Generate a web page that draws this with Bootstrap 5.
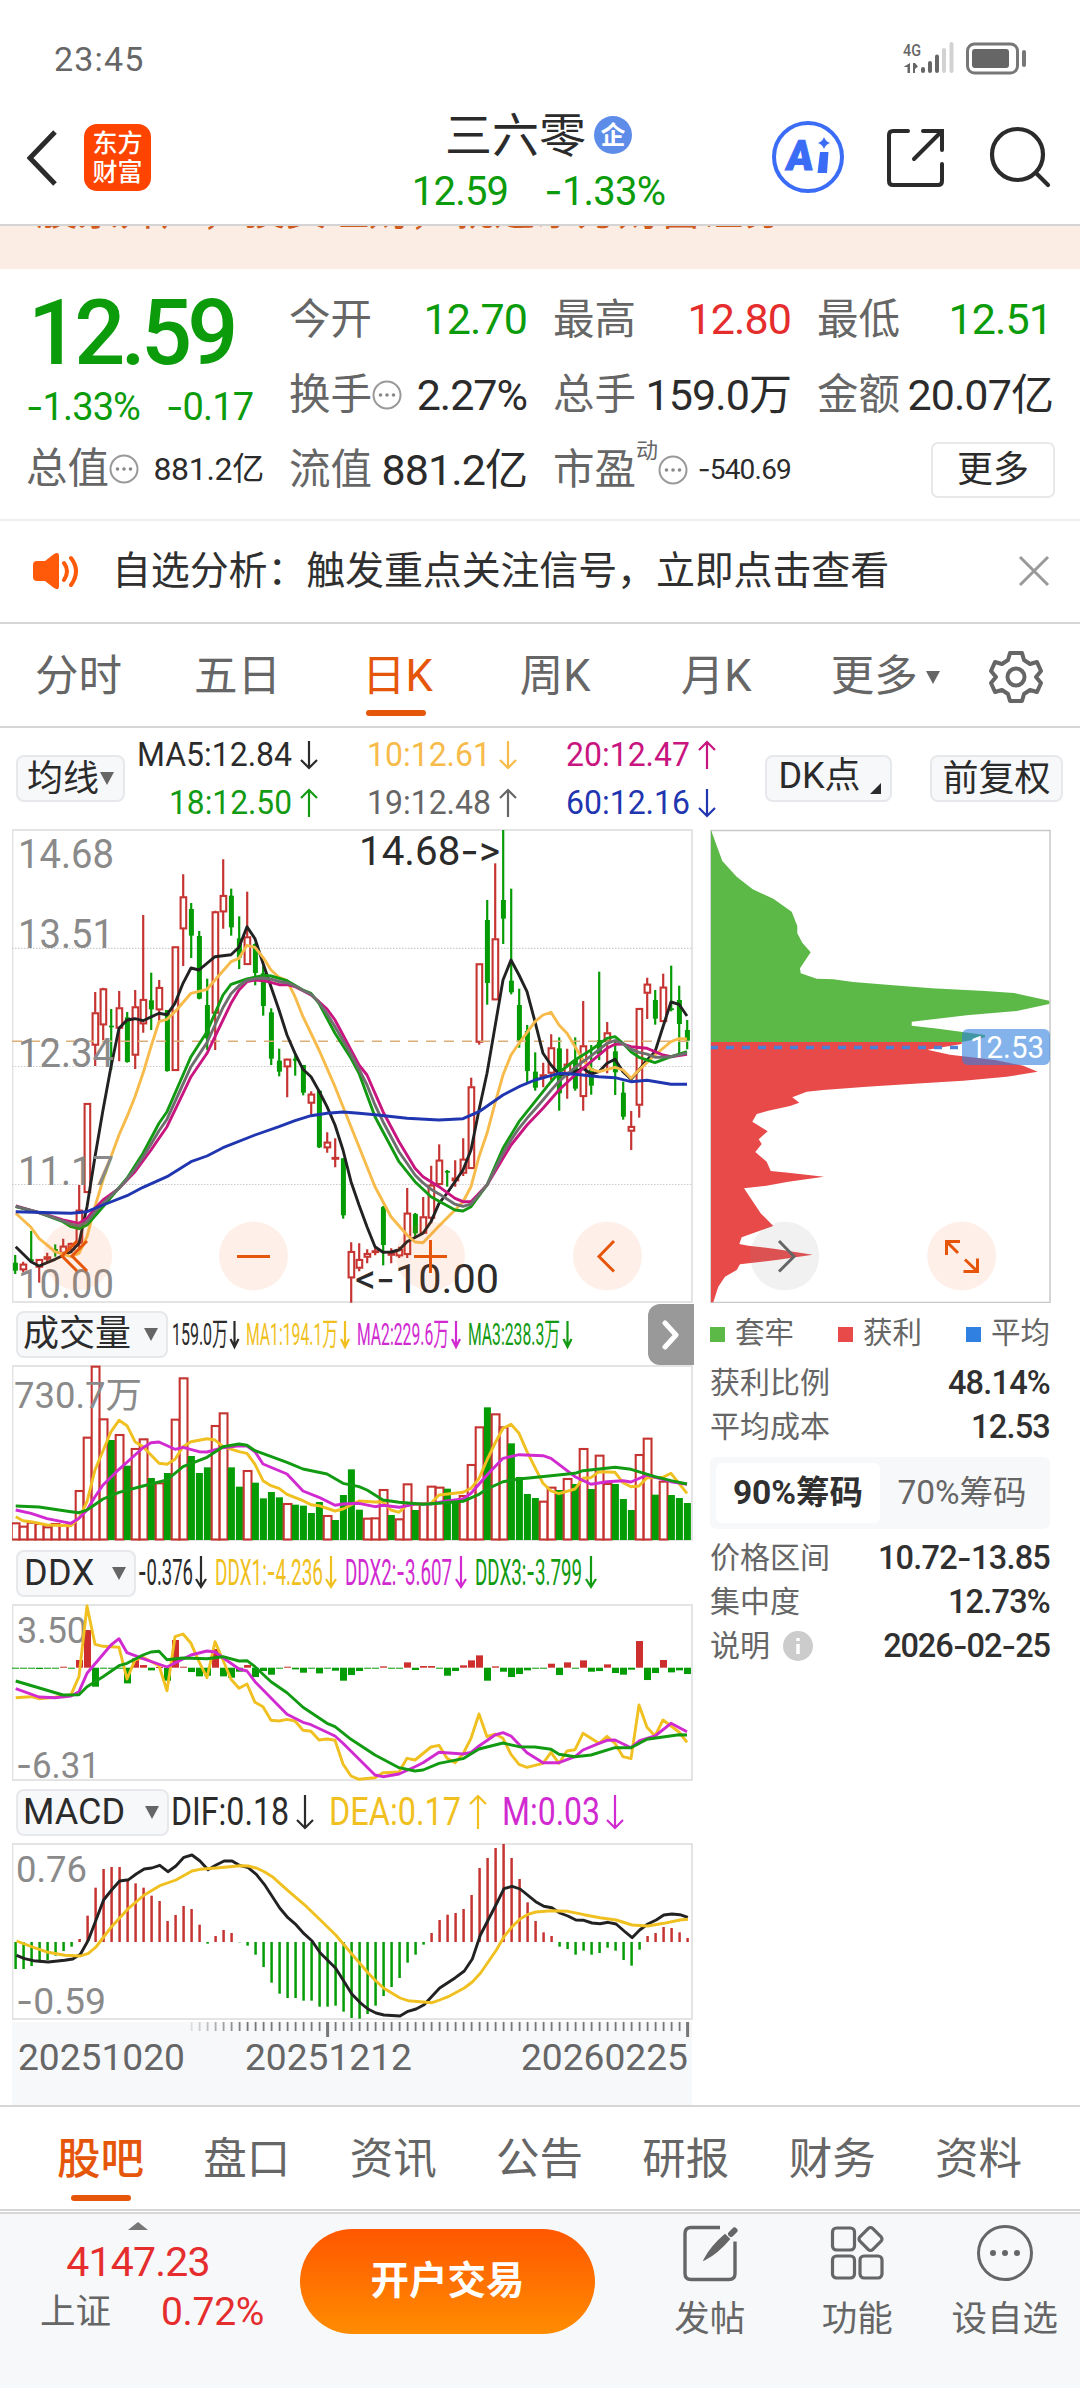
<!DOCTYPE html>
<html lang="zh-CN">
<head>
<meta charset="utf-8">
<meta name="viewport" content="width=device-width, initial-scale=1">
<title>三六零 12.59</title>
<link rel="stylesheet" href="https://cdn.jsdelivr.net/npm/bootstrap@5.3.0/dist/css/bootstrap.min.css">
<style>
  :root { --up:#e52d2d; --down:#0b9b0b; --ink:#2b2b2b; --soft:#666; --brand:#e5560b; --line:#d6d6d6; --pale:#f7f8fa; }
  body { width:1080px; height:2388px; overflow:hidden; background:#fff; color:var(--ink); line-height:1;
    font-family:Roboto,"Noto Sans CJK SC",sans-serif; }
  svg { display:block; flex:none; }
  svg text { font-family:Roboto,"Noto Sans CJK SC",sans-serif; }
  span, div { white-space:nowrap; }
  .hy { font-family:Inter,sans-serif; font-style:normal; line-height:0; }
  .c-up { color:var(--up); } .c-down { color:var(--down); } .c-soft { color:var(--soft); } .c-brand { color:var(--brand); }
  .status { height:118px; padding:0 52px 0 54px; color:#666; }
  .status .clock { font-size:34px; letter-spacing:1.2px; }
  .topbar { height:106px; border-bottom:2px solid #d4d4d4; box-sizing:content-box; }
  .logo { width:67px; height:67px; border-radius:13px; background:#ff4400; color:#fff; font-size:25px; font-weight:500; line-height:29px; margin-top:6px; }
  .title-name { font-size:47px; }
  .qi { width:38px; height:38px; border-radius:50%; background:#5d8ce9; color:#fff; font-size:25px; font-weight:700; }
  .title-quote { font-size:40px; letter-spacing:-.8px; }
  .ai { width:72px; height:72px; border:4px solid #3a6cf6; border-radius:50%; color:#3a6cf6; }
  .promo { height:43px; background:#fcede4; color:#cf5a1c; overflow:hidden; font-size:41.6px; padding-left:36px; }
  .promo span { display:block; margin-top:-36px; }
  .quote { height:250px; padding:22px 27px 0 26px; }
  .q-main { width:263px; flex:none; } .q-cell { width:238px; height:76px; }
  .q-main .big { font-size:90px; font-weight:500; letter-spacing:-4.8px; height:94px; line-height:85px; padding-left:2px; }
  .q-grid { gap:26px; }
  .lbl { font-size:41.5px; color:var(--soft); }
  .val { font-size:43px; letter-spacing:-.9px; }
  .v-sm { font-size:32px; letter-spacing:-.3px; } .v-xs { font-size:28px; letter-spacing:-.8px; }
  .more-btn { width:124px; height:56px; border:2px solid #e8e8e8; border-radius:7px; font-size:36px; color:var(--ink); padding:0; line-height:1; }
  .notice { height:105px; border-top:2px solid #eee; border-bottom:2px solid var(--line); padding:0 30px 1px 33px; font-size:39px; }
  .ktabs { height:104px; border-bottom:2px solid var(--line); font-size:43.5px; color:var(--soft); padding-top:4px; }
  .ktabs > div, .btabs > div { position:relative; }
  .tabline::after { content:""; position:absolute; left:50%; width:60px; height:6px; margin-left:-30px; border-radius:3px; background:var(--brand); }
  .ktabs .tabline::after { bottom:-17px; margin-left:-31px; } .btabs .tabline::after { bottom:-20px; }
  .chip { background:var(--pale); border:2px solid #e6e8eb; border-radius:8px; height:47px; font-size:36px; color:var(--ink); padding:0; line-height:1; }
  .tri { width:0; height:0; border:7px solid transparent; border-top:13px solid #666; border-bottom:0; }
  .ma-row { height:101px; padding-left:16px; }
  .kcol { width:694px; padding-left:12px; } .hd { height:62px; padding-left:4px; position:relative; }
  .side-btn { position:absolute; right:0; top:1px; width:46px; height:61px; background:#999; border-radius:12px 0 0 12px; }
  .dist { width:340px; margin-left:16px; }
  .legend { font-size:29.5px; color:var(--soft); height:62px; } .sq { width:15px; height:15px; margin-right:10px; }
  .drow { height:44px; font-size:30px; color:var(--soft); }
  .drow b { font-size:32.5px; font-weight:500; color:#303030; letter-spacing:-.8px; }
  .seg { height:72px; background:var(--pale); border-radius:6px; padding:6px; font-size:33.5px; color:var(--soft); margin:8px 0 7px; }
  .seg div { flex:1; height:60px; } .seg .on { background:#fff; border-radius:6px; color:#303030; font-weight:700; }
  .info-dot { width:30px; height:30px; border-radius:50%; background:#ccc; margin-left:13px; }
  .btabs { height:106px; border-top:2px solid var(--line); border-bottom:2px solid var(--line); font-size:43.5px; color:var(--soft); padding:3px 58px 0 57px; }
  .dock { height:178px; margin-top:1px; border-top:2px solid var(--line); background:var(--pale); }
  .dock-idx { width:300px; } .open-btn { width:295px; height:105px; margin-top:15px; border-radius:53px; border:0; color:#fff; font-size:38.5px; font-weight:700;
    background:linear-gradient(#ff5700,#ff8c00); }
  .dock-item { width:147.500px; font-size:35.5px; color:var(--soft); padding-top:10px; }
</style>
<script src="https://cdn.jsdelivr.net/npm/bootstrap@5.3.0/dist/js/bootstrap.bundle.min.js"></script>
</head>
<body>
<div class="status d-flex align-items-center justify-content-between">
  <span class="clock">23:45</span>
  <svg width="126" height="36" viewBox="904 42 126 36">
    <text x="905" y="57" font-size="17" font-weight="500" fill="#666" textLength="18" lengthAdjust="spacingAndGlyphs">4G</text>
    <path d="M912 64v10h-2.500v-6h-4zM915 64v10h2v-4l3-2.500-3-3.500z" fill="#666"/>
    <g stroke-width="4" stroke-linecap="round"><path d="M925 70v2M932 64v8M939 57.500v14.500" stroke="#666"/><path d="M946 51v21M953.500 45v27" stroke="#d2d2d2"/></g>
    <rect x="969.500" y="45" width="50" height="29" rx="7" fill="none" stroke="#777" stroke-width="3"/>
    <rect x="974" y="50" width="37" height="19" rx="3" fill="#666"/>
    <rect x="1024" y="51" width="4" height="17" rx="2" fill="#777"/>
  </svg>
</div>

<header class="topbar d-flex align-items-start">
  <svg width="31" height="56" viewBox="0 0 31 56" style="margin:12px 26px 0 27px"><path d="M28 2 3 28l25 26" fill="none" stroke="#2b2b2b" stroke-width="5"/></svg>
  <div class="logo d-flex flex-column align-items-center justify-content-center"><span>东方</span><span>财富</span></div>
  <div class="d-flex flex-column align-items-center" style="width:385px;margin-left:195px;margin-right:41px">
    <div class="d-flex align-items-center" style="height:34px"><span class="title-name me-2">三六零</span><span class="qi d-flex align-items-center justify-content-center">企</span></div>
    <div class="title-quote c-down d-flex" style="margin-top:20px;gap:36px"><span>12.59</span><span><i class="hy">-</i>1.33%</span></div>
  </div>
  <div class="ai d-flex align-items-center justify-content-center" style="margin-top:3px">
    <svg width="64" height="64" viewBox="776 125 64 64"><text x="0" y="0" transform="translate(785 170) skewX(-6)" font-size="42" font-weight="900" fill="#3a6cf6" stroke="#3a6cf6" textLength="27" lengthAdjust="spacingAndGlyphs">A</text>
    <path d="M820 152h8.500l-1.500 21h-9.500zM824 137q1.500 4.500 6 6-4.500 1.500-6 6-1.500-4.500-6-6 4.500-1.500 6-6z" fill="#3a6cf6"/></svg>
  </div>
  <svg width="60" height="60" viewBox="887 128 60 60" style="margin:10px 0 0 42px" fill="none" stroke="#2b2b2b" stroke-width="4" stroke-linecap="round"><path d="M909 131h-15q-4 0-4 4v46q0 4 4 4h45q4 0 4-4v-17M924 131h19v19M942 132l-27 27"/></svg>
  <svg width="64" height="64" viewBox="989 126 64 64" style="margin:8px 0 0 42px" fill="none" stroke="#2b2b2b" stroke-width="4.200" stroke-linecap="round"><circle cx="1018.500" cy="154.500" r="25.500"/><path d="m1037 173 12 12"/></svg>
</header>

<div class="promo"><span>股票开户，投资理财，就选东方财富证券</span></div>

<section class="quote d-flex">
  <div class="q-main">
    <div class="big c-down">12.59</div>
    <div class="c-down d-flex" style="font-size:38px;height:57px;padding-top:3px;gap:26px;letter-spacing:-.9px"><span><i class="hy">-</i>1.33%</span><span><i class="hy">-</i>0.17</span></div>
    <div class="q-cell d-flex align-items-center justify-content-between" style="height:53px"><span class="d-flex align-items-center lbl">总值<svg width="30" height="30"><use href="#dots"/></svg></span><span class="v-sm">881.2亿</span></div>
  </div>
  <div class="flex-fill">
    <div class="q-grid d-flex align-items-center" style="height:57px">
      <div class="q-cell d-flex align-items-center justify-content-between"><span class="lbl">今开</span><span class="val c-down">12.70</span></div>
      <div class="q-cell d-flex align-items-center justify-content-between"><span class="lbl">最高</span><span class="val c-up">12.80</span></div>
      <div class="q-cell d-flex align-items-center justify-content-between" style="width:235px"><span class="lbl">最低</span><span class="val c-down">12.51</span></div>
    </div>
    <div class="q-grid d-flex align-items-center" style="height:94px">
      <div class="q-cell d-flex align-items-center justify-content-between"><span class="d-flex align-items-center lbl">换手<svg width="30" height="30"><use href="#dots"/></svg></span><span class="val" style="letter-spacing:-1px">2.27%</span></div>
      <div class="q-cell d-flex align-items-center justify-content-between"><span class="lbl">总手</span><span class="val">159.0万</span></div>
      <div class="q-cell d-flex align-items-center justify-content-between" style="width:236px"><span class="lbl">金额</span><span class="val">20.07亿</span></div>
    </div>
    <div class="q-grid d-flex align-items-center" style="height:56px">
      <div class="q-cell d-flex align-items-center justify-content-between"><span class="lbl">流值</span><span class="val">881.2亿</span></div>
      <div class="q-cell d-flex align-items-center justify-content-between"><span class="d-flex align-items-center lbl">市盈<span style="font-size:22px;margin-top:-38px">动</span><svg width="30" height="30"><use href="#dots"/></svg></span><span class="v-xs"><i class="hy">-</i>540.69</span></div>
      <div class="q-cell d-flex align-items-center justify-content-end"><button class="btn more-btn">更多</button></div>
    </div>
  </div>
</section>

<div class="notice d-flex align-items-center">
  <svg width="46" height="38" viewBox="0 0 46 38"><path d="M0 13q0-4 4-4h8L21 2q5-3 5 2v30q0 5-5 2l-9-7H4q-4 0-4-4z" fill="#ff5a0a"/><path d="M31 11q6 8 0 17M38 6q10 13 0 27" fill="none" stroke="#ff5a0a" stroke-width="4" stroke-linecap="round"/></svg>
  <span class="flex-fill" style="margin-left:33px;color:#303030;letter-spacing:-.15px">自选分析：触发重点关注信号，立即点击查看</span>
  <svg width="32" height="32"><path d="m2 2 28 28M30 2 2 30" stroke="#999" stroke-width="3"/></svg>
</div>

<nav class="ktabs d-flex align-items-center">
  <div style="margin-left:35px;width:159px">分时</div><div style="width:168px">五日</div>
  <div class="c-brand tabline">日K</div>
  <div style="margin-left:87px;width:161px">周K</div><div style="width:150px">月K</div>
  <div class="d-flex align-items-center" style="width:158px">更多<i class="tri ms-2"></i></div>
  <svg width="54" height="54" viewBox="-27 -27 54 54" fill="none" stroke="#666" stroke-width="4" stroke-linejoin="round"><path d="M-6-24H6L8-17 14-13 21-15 25-6 20 0 25 6 21 15 14 13 8 17 6 24H-6L-8 17-14 13-21 15-25 6-20 0-25-6-21-15-14-13-8-17z"/><circle r="8.500"/></svg>
</nav>

<div class="ma-row d-flex align-items-center">
  <button class="btn chip d-flex align-items-center justify-content-center" style="width:109px">均线<i class="tri" style="margin-left:1px"></i></button>
  <svg width="600" height="100" viewBox="130 729 600 100" font-size="33" style="margin-left:5px">
    <g id="maHead"></g>
  </svg>
  <button class="btn chip d-flex align-items-end justify-content-center" style="width:127px;margin-left:35px;padding:0 0 6px 2px"><span>DK点</span><svg width="11" height="11" style="margin-left:9px"><path d="M11 0v11H0z" fill="#2b2b2b"/></svg></button>
  <button class="btn chip" style="width:133px;margin-left:38px">前复权</button>
</div>

<main class="d-flex" style="height:1276px">
  <div class="kcol">
    <svg id="kline" width="682" height="474" viewBox="12 829 682 474"></svg>
    <div class="hd d-flex align-items-center">
      <button class="btn chip d-flex align-items-center" style="width:152px;padding-left:5px">成交量<i class="tri ms-auto" style="margin-right:8px"></i></button>
      <svg width="420" height="60" viewBox="170 1304 420 60" style="margin-left:2px" font-size="32"><g id="volHead"></g></svg>
      <div class="side-btn d-flex align-items-center justify-content-center"><svg width="20" height="30"><path d="m4 3 11 12L4 27" fill="none" stroke="#fff" stroke-width="5" stroke-linecap="round" stroke-linejoin="round"/></svg></div>
    </div>
    <svg id="vol" width="682" height="177" viewBox="12 1365 682 177"></svg>
    <div class="hd d-flex align-items-center">
      <button class="btn chip d-flex align-items-center" style="width:120px;padding-left:6px;letter-spacing:.4px">DDX<i class="tri ms-auto" style="margin-right:8px"></i></button>
      <svg width="470" height="60" viewBox="138 1543 470 60" style="margin-left:2px" font-size="37"><g id="ddxHead"></g></svg>
    </div>
    <svg id="ddx" width="682" height="177" viewBox="12 1604 682 177"></svg>
    <div class="hd d-flex align-items-center">
      <button class="btn chip d-flex align-items-center" style="width:153px;padding-left:5px">MACD<i class="tri ms-auto" style="margin-right:8px"></i></button>
      <svg width="470" height="60" viewBox="170 1782 470 60" style="margin-left:1px" font-size="38"><g id="macdHead"></g></svg>
    </div>
    <svg id="macd" width="682" height="177" viewBox="12 1843 682 177"></svg>
    <svg id="axis" width="682" height="85" viewBox="12 2020 682 85"></svg>
  </div>
  <div class="dist">
    <svg id="chips" width="341" height="474" viewBox="710 829 341 474"></svg>
    <div class="legend d-flex align-items-center justify-content-between">
      <span class="d-flex align-items-center"><i class="sq" style="background:#5cb947"></i>套牢</span>
      <span class="d-flex align-items-center"><i class="sq" style="background:#e84a4a"></i>获利</span>
      <span class="d-flex align-items-center"><i class="sq" style="background:#3080e2"></i>平均</span>
    </div>
    <div style="margin-top:-4px">
      <div class="drow d-flex align-items-center justify-content-between"><span>获利比例</span><b>48.14%</b></div>
      <div class="drow d-flex align-items-center justify-content-between"><span>平均成本</span><b>12.53</b></div>
      <div class="seg d-flex text-center"><div class="on d-flex align-items-center justify-content-center">90%筹码</div><div class="d-flex align-items-center justify-content-center">70%筹码</div></div>
      <div class="drow d-flex align-items-center justify-content-between"><span>价格区间</span><b>10.72<i class="hy">-</i>13.85</b></div>
      <div class="drow d-flex align-items-center justify-content-between"><span>集中度</span><b>12.73%</b></div>
      <div class="drow d-flex align-items-center justify-content-between"><span class="d-flex align-items-center">说明<svg class="info-dot" viewBox="0 0 30 30"><path d="M15 7v3M15 13v10" stroke="#fff" stroke-width="3.500"/></svg></span><b style="letter-spacing:-1.100px">2026<i class="hy">-</i>02<i class="hy">-</i>25</b></div>
    </div>
  </div>
</main>

<nav class="btabs d-flex align-items-center justify-content-between">
  <div class="c-brand tabline" style="font-weight:500">股吧</div><div>盘口</div><div>资讯</div><div>公告</div><div>研报</div><div>财务</div><div>资料</div>
</nav>

<footer class="dock d-flex align-items-start">
  <div class="dock-idx d-flex flex-column align-items-center" style="padding-right:24px">
    <svg width="20" height="8" style="margin-top:8px"><path d="M10 0 20 8H0z" fill="#777"/></svg>
    <span class="c-up" style="font-size:41px;margin-top:12px;letter-spacing:-.8px">4147.23</span>
    <div class="d-flex align-items-center" style="gap:50px;margin-top:10px;padding-left:28px"><span class="c-soft" style="font-size:35.500px">上证</span><span class="c-up" style="font-size:39px;letter-spacing:-.3px">0.72%</span></div>
  </div>
  <button class="open-btn">开户交易</button>
  <div class="dock-item d-flex flex-column align-items-center" style="margin-left:41px">
    <svg width="56" height="58" viewBox="682 2223 56 58" fill="none" stroke="#666" stroke-width="3.400"><path d="M720 2226.500h-29q-6 0-6 6v40q0 6 6 6h38q6 0 6-6v-32"/><path d="M729 2238q-12 14-24 20 6-12 20-24z" fill="#666" stroke-width="2"/><path d="m731 2233 3.500-3.500" stroke-width="6" stroke-linecap="round"/></svg><span style="margin-top:20px">发帖</span></div>
  <div class="dock-item d-flex flex-column align-items-center">
    <svg width="56" height="58" viewBox="830 2223 56 58" fill="none" stroke="#666" stroke-width="3.200"><rect x="833.500" y="2227" width="22" height="22" rx="4"/><rect x="833.500" y="2255" width="22" height="22" rx="4"/><rect x="861" y="2255" width="22" height="22" rx="4"/><rect x="862.500" y="2229" width="18" height="18" rx="3" transform="rotate(45 871.500 2238)"/></svg><span style="margin-top:20px">功能</span></div>
  <div class="dock-item d-flex flex-column align-items-center">
    <svg width="58" height="58" viewBox="-29 -29 58 58"><circle r="26.500" fill="none" stroke="#666" stroke-width="3"/><g fill="#666"><circle cx="-12" r="3"/><circle r="3"/><circle cx="12" r="3"/></g></svg><span style="margin-top:20px">设自选</span></div>
</footer>

<svg width="0" height="0" class="position-absolute"><defs><symbol id="dots" viewBox="0 0 30 30"><circle cx="15" cy="15" r="13.500" fill="none" stroke="#999" stroke-width="2"/><g fill="#888"><circle cx="8.500" cy="15" r="1.800"/><circle cx="15" cy="15" r="1.800"/><circle cx="21.500" cy="15" r="1.800"/></g></symbol></defs></svg>

<script>
const RED='#c63432', GREEN='#049c04', BLACK='#2b2b2b', GOLD='#f0c020', PINK='#d02ad0', LEAF='#129a12';
const put=(id,s)=>document.getElementById(id).innerHTML=s;
const X=i=>15+8*i;
const txt=(s,x,y,w,size,fill)=>`<text x="${x}" y="${y}" font-size="${size}" fill="${fill}" textLength="${w}" lengthAdjust="spacingAndGlyphs">${s.replace('-','<tspan class="hy">-</tspan>')}</text>`;
const arrow=(x,y0,y1,up,c,h=6)=>up?`<path d="M${x} ${y1}V${y0+1}M${x-h} ${y0+9}L${x} ${y0+1}L${x+h} ${y0+9}" fill="none" stroke="${c}" stroke-width="2.2"/>`
  :`<path d="M${x} ${y0}V${y1-1}M${x-h} ${y1-9}L${x} ${y1-1}L${x+h} ${y1-9}" fill="none" stroke="${c}" stroke-width="2.2"/>`;
/* points are stored at three times the drawn scale */
const line=(s,oy,c,sx=3,w=2.9)=>`<polyline fill="none" stroke="${c}" stroke-width="${w}" stroke-linejoin="round" points="${s.trim().split(/\s+/).map(p=>{const[a,b]=p.split(',');return (a/sx).toFixed(1)+','+(oy+b/3).toFixed(1)}).join(' ')}"/>`;
const box=(y0,y1)=>`<rect x="12.5" y="${y0}" width="679.5" height="${y1-y0}" fill="none" stroke="#e2e2e2" stroke-width="1.8"/>`;

/* header rows */
put('maHead',[['MA5:12.84',137,155,766,0,BLACK,309],['10:12.61',367,124,766,0,'#f7bb4b',508],['20:12.47',566,124,766,1,'#c91580',707],
 ['18:12.50',169,123,814,1,LEAF,309],['19:12.48',367,124,814,1,'#666',508],['60:12.16',566,124,814,0,'#1f36b0',707]]
 .map(([s,x,w,y,u,c,a])=>txt(s,x,y,w,33,c)+arrow(a,y-25,y+3,u,c,8)).join(''));
put('volHead',[['159.0万',172,56,BLACK,234.5],['MA1:194.1万',246,92,GOLD,345],['MA2:229.6万',357,92,PINK,456],['MA3:238.3万',468,92,LEAF,567.5]]
 .map(([s,x,w,c,a])=>txt(s,x,1345,w,32,c)+arrow(a,1321,1348,0,c,4)).join(''));
put('ddxHead',[['-0.376',138,55,BLACK,201],['DDX1:-4.236',215,108,GOLD,331],['DDX2:-3.607',345,107,PINK,461],['DDX3:-3.799',475,107,LEAF,591]]
 .map(([s,x,w,c,a])=>txt(s,x,1585,w,37,c)+arrow(a,1556,1588,0,c,5)).join(''));
put('macdHead',[['DIF:0.18',171,118,BLACK,305,0],['DEA:0.17',329,132,GOLD,478,1],['M:0.03',502,98,PINK,615,0]]
 .map(([s,x,w,c,a,u])=>txt(s,x,1825,w,38,c)+arrow(a,1795,1829,u,c,8)).join(''));

/* candles: colour, high, body top, body bottom, low */
const K=`g1305,1328,1352,1362 r1325,1332,1350,1357 g1233,1318,1322,1322 r1318,1318,1342,1388 r1298,1310,1318,1328 g1273,1287,1297,1310 r1256,1278,1300,1305 r1268,1270,1290,1300 r1095,1170,1270,1290 r850,850,1118,1118
r516,578,676,738 r503,506,615,660 g567,617,622,750 r513,563,625,724 g576,592,726,728 r510,560,706,747 r285,538,612,638 g458,541,568,630 r480,502,570,605 g570,570,753,755
r380,380,752,752 r163,230,327,438 g249,267,347,414 g333,348,536,538 g476,555,655,690 r272,275,580,690 r118,226,276,326 g206,227,322,347 g289,355,413,447 r215,350,434,434
g370,372,459,496 g437,460,558,587 g565,577,716,735 g686,722,755,769 r716,717,741,832 g700,716,722,767 g735,735,818,826 r814,822,850,884 g812,812,982,984 r937,966,984,998
r955,1012,1017,1042 g1015,1015,1186,1196 r1267,1294,1374,1448 r1270,1318,1345,1354 r1288,1300,1312,1330 r1278,1292,1298,1306 g1158,1161,1275,1336 r1285,1298,1306,1330 r1280,1288,1308,1314 r1104,1179,1304,1314
g1179,1182,1240,1250 r1131,1190,1240,1242 r1037,1095,1195,1210 r973,1020,1094,1094 g1050,1053,1058,1100 r1021,1074,1083,1100 r955,1017,1060,1068 r773,800,1046,1046 r431,431,667,674 g240,300,489,554
r130,356,540,540 g30,240,296,372 g206,482,517,523 g506,555,662,683 g615,633,753,792 g697,755,803,812 r728,764,770,802 r643,683,760,780 g652,685,820,872 r686,732,760,836
g652,720,806,812 r543,677,830,872 g675,745,797,824 g455,660,703,720 r606,638,665,760 g660,694,757,825 g785,818,890,899 r873,919,934,990 r565,565,856,893 r473,492,520,597
g510,540,596,614 r461,501,605,605 g437,565,570,574 g497,540,612,700 g600,630,662,688`.split(/\s+/);
const candles=K.map((s,i)=>{const r=s[0]=='r',[h,t,b,l]=s.slice(1).split(',').map(v=>820+v/3),x=X(i)+.2;
  return r?`<path d="M${x} ${h}V${t}M${x} ${b}V${l}" stroke="${RED}" stroke-width="2.2"/><rect x="${x-2.6}" y="${t+.6}" width="5.6" height="${Math.max(b-t-1.2,.8)}" fill="#fff" stroke="${RED}" stroke-width="2.1"/>`
  :`<path d="M${x} ${h}V${l}" stroke="${GREEN}" stroke-width="2.2"/><rect x="${x-2.3}" y="${t}" width="5" height="${Math.max(b-t,1.6)}" fill="${GREEN}"/>`}).join('');
const m18='47,1160 117,1178 189,1205 213,1220 237,1226 261,1215 309,1160 381,1075 429,1000 477,910 501,875 549,765 573,710 621,635 645,580 669,525 693,493 741,477 789,466 813,468 861,482 909,510 933,520 957,550 1005,640 1053,715 1077,760 1125,890 1197,1025 1245,1085 1293,1130 1365,1170 1389,1173 1413,1160 1461,1095 1485,1040 1509,985 1557,905 1605,845 1653,785 1677,758 1725,720 1773,690 1821,655 1845,650 1869,670 1893,695 1917,712 1965,728 2013,710 2061,695';
const m20='47,1158 141,1185 189,1200 237,1210 261,1195 285,1165 309,1140 357,1105 405,1055 453,990 477,955 501,920 549,820 573,770 621,700 645,650 693,550 717,510 741,485 765,480 789,482 813,487 837,494 861,494 885,500 909,512 933,525 957,545 981,567 1005,600 1029,645 1053,690 1077,735 1101,765 1149,875 1197,965 1245,1045 1269,1070 1317,1100 1365,1135 1389,1145 1413,1145 1461,1095 1509,1015 1533,975 1581,915 1629,865 1677,810 1725,765 1773,725 1821,685 1845,673 1869,672 1893,680 1941,685 1989,705 2013,710 2061,703';
const at=(s,x)=>{const p=s.split(' ').map(q=>q.split(',').map(Number));for(let i=1;i<p.length;i++)if(x<=p[i][0]){const[a,b]=[p[i-1],p[i]];return a[1]+(b[1]-a[1])*(x-a[0])/(b[0]-a[0])}return p[p.length-1][1]};
const m19=[...Array(85)].map((_,i)=>{const x=Math.max(47,45+24*i);return x+','+(at(m18,x)+at(m20,x))/2}).join(' ');
const pad=(x,c='#f96a28',o=.1)=>`<circle cx="${x}" cy="1256" r="34.5" fill="${c}" fill-opacity="${o}"/>`;
const ink='fill="none" stroke="#e5560b" stroke-width="3"';
put('kline',box(830,1302)+[948.3,1066.5,1184.5].map(y=>`<path d="M12 ${y}H692" stroke="#ccc" stroke-width="1.2" stroke-dasharray="1.5 1.5"/>`).join('')
 +candles+`<path d="M12 1041.3H692" stroke="#dcae78" stroke-width="1.6" stroke-dasharray="10 8"/>`
 +line('47,1280 93,1325 117,1338 165,1318 213,1295 237,1270 261,1160 285,1010 309,870 333,740 357,625 381,600 405,596 429,602 477,580 501,584 525,550 549,490 573,444 597,450 645,410 693,404 717,382 741,320 765,356 789,430 813,500 837,570 861,645 885,700 909,748 933,770 957,813 981,860 1005,915 1029,990 1053,1085 1077,1155 1101,1220 1125,1280 1149,1297 1173,1296 1197,1290 1221,1265 1269,1240 1293,1205 1317,1150 1341,1120 1389,1050 1413,990 1437,870 1461,760 1485,620 1509,480 1533,420 1557,465 1581,515 1605,605 1629,700 1653,735 1677,762 1701,765 1749,745 1773,762 1797,755 1821,730 1845,718 1869,755 1893,778 1917,750 1941,720 1965,695 1989,620 2013,546 2037,553 2061,588',820,'#222')
 +line('47,1180 93,1222 117,1255 165,1295 213,1310 237,1300 261,1250 285,1160 309,1080 333,1010 357,945 381,890 405,830 429,760 453,680 477,605 501,598 525,575 573,520 621,508 645,480 693,425 717,415 741,376 765,382 789,412 813,450 837,472 861,482 885,530 909,590 957,690 1005,800 1029,860 1077,980 1125,1100 1173,1190 1221,1245 1245,1266 1269,1268 1317,1218 1365,1170 1389,1145 1413,1100 1437,1010 1461,940 1485,850 1509,765 1533,705 1557,670 1605,605 1629,585 1653,577 1677,615 1701,640 1749,720 1773,748 1797,755 1845,742 1869,750 1893,775 1917,750 1965,705 2013,665 2037,656 2061,657',820,'#f7bb4b')
 +line(m20,820,'#c91580')+line(m18,820,LEAF)+line(m19,820,'#6e6e6e')
 +line('47,1175 213,1180 261,1175 309,1155 381,1127 429,1102 501,1070 573,1025 621,1008 669,983 765,945 837,920 885,902 933,887 981,880 1029,876 1077,880 1125,884 1221,895 1317,900 1389,896 1437,875 1509,825 1557,800 1605,780 1677,760 1725,763 1797,770 1845,773 1893,785 1941,781 2013,793 2061,793',820,'#1f36b0')
 +[['14.68',868],['13.51',947.5],['12.34',1066.5],['11.17',1184.5],['10.00',1298]].map(([s,y])=>txt(s,18,y,96,40,'#8a8a8a')).join('')
 +txt('14.68-&gt;',359,865,141,40,BLACK)+txt('&lt;-10.00',355,1293,144,40,BLACK)
 +pad(77.7)+pad(253.5)+pad(430.5)+pad(607.5)
 +`<path ${ink} d="M77 1241l-15 15 15 15M87 1241l-15 15 15 15M237 1256.500h33M414 1256.500h33M430.500 1240v33M614 1241l-15 15.500 15 15"/>`);

/* chip distribution */
const poly=(s,c)=>`<polygon fill="${c}" points="${s.split(' ').map(p=>{const[a,b]=p.split(',');return (690+a/3).toFixed(1)+','+(820+b/3).toFixed(1)}).join(' ')}"/>`;
put('chips',`<rect x="711" y="830.500" width="339" height="472" fill="none" stroke="#c8c8c8" stroke-width="1.500"/>`
 +poly('63,30 97,123 140,170 188,208 250,236 305,275 322,318 322,340 337,368 362,397 340,430 330,445 332,460 380,476 430,478 490,486 600,495 725,505 885,513 972,519 1078,542 1078,552 980,573 830,586 665,605 665,617 745,626 885,645 885,652 815,666 63,666','#5cb947')
 +poly('63,666 815,666 815,672 712,689 780,704 915,720 1000,737 1043,755 950,770 820,782 660,792 530,800 400,810 350,815 307,832 328,848 300,858 235,872 200,882 187,905 233,934 206,958 215,972 196,996 230,1025 242,1053 295,1058 402,1070 295,1085 225,1098 162,1105 212,1180 250,1218 155,1252 148,1272 175,1277 252,1286 368,1304 265,1319 150,1333 140,1350 105,1370 85,1400 70,1447 63,1447','#e84a4a')
 +`<path d="M711 1047.500H962" stroke="#4a80d8" stroke-width="3.500" stroke-dasharray="8 8" stroke-dashoffset="1"/><rect x="962" y="1029" width="88" height="36" rx="6" fill="#3280e0" fill-opacity=".6"/>`
 +txt('12.53',970,1058,74,32,'#fff')+pad(784.7,'#888',.12)+pad(961.7)
 +`<path d="M779 1241l15 15.500-15 15" fill="none" stroke="#666" stroke-width="3"/><path ${ink} d="M946.500 1255v-13.500H960M947 1242l11 11M977.500 1258.500V1271.500H963.500M977 1271l-12-11.500"/>`);

/* volume */
const V='r670 r680 r668 r672 r682 r672 r676 r670 r573 r413 r200 r358 g420 r405 g497 r447 r418 g534 r550 g519 r359 r235 g468 g519 g502 r378 r340 g502 g560 r513 g548 g595 g576 g592 r612 g614 g617 g639 g606 r648 g660 g585 g508 g629 r656 r655 r570 g645 r658 r553 g630 r612 r560 r563 g566 g606 r588 r495 r382 g322 r343 r382 g430 g531 g582 g594 r605 r563 g570 r537 g552 r447 g567 r467 r552 g552 g597 g630 r465 r416 g584 r545 g585 g594 g609'.split(' ');
put('vol',box(1366,1540)+V.map((s,i)=>{const y=1300+s.slice(1)/3,x=X(i)+.4;return s[0]=='r'?`<rect x="${x-3.7}" y="${y}" width="7.8" height="${1539.5-y}" fill="#fff" stroke="${RED}" stroke-width="2.1"/>`:`<rect x="${x-3.5}" y="${y}" width="7" height="${1540-y}" fill="${GREEN}"/>`}).join('')
 +txt('730.7万',14,1408,128,36,'#8a8a8a')
 +line('47,650 69,662 93,665 141,675 213,677 237,655 261,605 285,510 333,395 357,361 381,377 405,425 429,440 477,490 501,493 525,478 549,440 573,425 621,416 645,420 669,440 717,455 741,460 765,493 789,542 813,557 837,565 861,583 909,602 933,614 957,617 1005,633 1029,627 1077,603 1125,606 1149,605 1173,630 1197,637 1221,615 1293,610 1317,585 1389,577 1413,565 1437,535 1461,480 1485,430 1509,385 1533,373 1557,400 1581,455 1629,550 1653,573 1677,581 1725,567 1749,535 1773,533 1797,515 1845,517 1869,548 1893,560 1917,558 1941,533 1989,532 2013,520 2061,580',1300,GOLD)
 +line('47,630 93,640 141,656 213,670 237,655 261,630 285,590 309,555 357,508 405,465 429,443 453,428 477,426 525,448 549,442 597,455 621,456 669,443 717,437 741,438 765,455 789,492 861,522 909,573 957,592 1005,616 1029,612 1077,610 1125,620 1149,616 1197,622 1245,612 1293,612 1341,603 1389,597 1413,580 1461,525 1509,475 1557,464 1629,467 1653,475 1725,530 1773,553 1821,545 1869,542 1893,546 1941,525 2013,545 2061,553',1300,PINK)
 +line('47,618 117,621 213,635 237,638 261,630 309,597 357,577 429,558 501,540 549,500 621,472 669,440 717,432 741,436 765,452 861,487 909,507 981,522 1029,550 1077,560 1101,570 1149,600 1197,607 1269,613 1317,610 1389,604 1437,583 1461,567 1509,545 1557,537 1653,527 1725,520 1749,512 1797,507 1845,502 1893,508 1965,530 2013,542 2061,552',1300,LEAF));

/* DDX */
const D=[-2,-2,-2,-4,-2,-2,3,-2,23,113,-57,-2,-2,-2,-47,28,8,-8,2,-39,83,3,-13,-26,-24,56,-26,-30,-12,8,-28,-10,-21,-2,3,-5,-15,-3,-17,-3,-9,-39,-22,-10,-3,-3,4,-3,-3,16,-7,5,5,-2,-24,-10,7,22,37,-39,4,-12,-28,-19,-8,-2,-2,12,-22,16,-2,22,-12,-10,10,-16,-21,-6,80,-37,-16,23,-14,-8,-19];
put('ddx',box(1605,1780)+D.map((v,i)=>`<rect x="${X(i)-3}" y="${1667.7-(v>0?v/3:0)}" width="7" height="${Math.max(Math.abs(v)/3,1)}" fill="${v>0?'#cc2f2d':GREEN}"/>`).join('')
 +txt('3.50',17,1643,70,37,'#8a8a8a')+txt('-6.31',16,1778,84,37,'#8a8a8a')
 +line('47,1193 93,1190 117,1196 165,1192 213,1184 237,1130 261,918 285,1033 309,1039 357,1042 381,1137 405,1080 429,1072 477,1097 501,1172 525,1010 549,1002 573,1030 597,1085 621,1133 645,1025 669,1080 693,1138 717,1165 741,1152 765,1207 789,1220 813,1261 837,1263 861,1258 885,1263 909,1291 933,1294 957,1320 981,1317 1005,1321 1029,1392 1053,1428 1077,1438 1125,1433 1149,1418 1197,1416 1221,1375 1245,1380 1293,1341 1317,1336 1341,1375 1365,1388 1389,1362 1413,1315 1437,1242 1461,1310 1485,1302 1509,1315 1533,1363 1557,1393 1581,1402 1629,1390 1653,1357 1677,1390 1701,1353 1725,1349 1749,1300 1797,1330 1821,1309 1845,1330 1869,1370 1893,1376 1917,1215 1941,1282 1965,1308 1989,1260 2037,1296 2061,1327',1300,GOLD)
 +line('47,1166 117,1191 165,1193 213,1188 237,1175 261,1120 333,1035 357,1016 381,1058 429,1076 501,1101 573,1065 621,1053 645,1056 717,1107 741,1113 765,1145 861,1243 909,1267 933,1274 1005,1308 1029,1330 1125,1425 1149,1430 1197,1422 1245,1400 1269,1388 1317,1357 1389,1362 1413,1357 1437,1338 1485,1305 1509,1298 1533,1308 1581,1358 1629,1388 1677,1388 1725,1370 1749,1350 1797,1330 1821,1321 1845,1320 1893,1343 1917,1323 1965,1308 2013,1270 2061,1295',1300,PINK)
 +line('47,1143 189,1185 237,1184 261,1160 309,1130 357,1097 381,1090 429,1065 453,1056 477,1054 501,1079 549,1074 621,1076 669,1070 717,1083 741,1082 765,1100 813,1145 861,1178 909,1222 981,1270 1005,1280 1053,1318 1125,1365 1197,1403 1245,1413 1269,1410 1317,1390 1389,1376 1437,1347 1509,1329 1557,1340 1605,1341 1653,1348 1677,1363 1725,1370 1773,1365 1845,1343 1893,1343 1941,1318 2037,1304 2061,1305',1300,LEAF));

/* MACD */
const M=[597,597,588,577,570,557,543,530,507,437,353,297,291,291,330,340,353,377,393,453,435,408,417,464,521,498,480,489,517,527,554,591,638,671,684,684,692,692,710,710,707,725,744,746,732,707,678,651,624,578,554,524,489,450,434,429,417,375,294,264,234,222,264,327,397,453,487,498,530,537,554,542,554,549,533,542,570,587,539,498,489,471,474,487,504];
put('macd',box(1844,2019)+M.map((v,i)=>`<path d="M${X(i)+.6} 1942V${1770+v/3}" stroke="${v<515?RED:GREEN}" stroke-width="2.5"/>`).join('')
 +txt('0.76',16,1882,71,36,'#8a8a8a')+txt('-0.59',16,2014,90,36,'#8a8a8a')
 +line('37,556 55,566 75,572 108,576 145,571 163,567 180,553 198,510 215,450 232,390 250,360 268,333 288,329 305,312 323,297 340,294 358,286 376,305 394,288 412,262 430,255 448,273 466,299 484,285 502,273 520,273 538,287 556,293 574,313 592,343 627,415 645,443 663,464 681,491 699,513 717,548 752,595 770,633 788,672 806,697 824,717 842,729 860,735 896,738 914,724 932,717 950,704 985,654 1020,623 1040,603 1058,567 1076,495 1112,402 1129,356 1147,349 1165,357 1200,395 1218,409 1236,413 1254,429 1272,438 1290,450 1308,451 1326,459 1344,461 1362,457 1380,462 1398,483 1416,503 1433,480 1451,462 1470,450 1487,435 1505,432 1523,434 1541,442',1770,'#222',2.24)
 +line('37,513 75,532 108,547 145,556 180,558 198,550 215,531 250,470 288,415 323,375 358,347 394,330 430,303 448,298 484,294 538,287 556,288 574,294 592,305 610,320 645,362 681,403 717,449 752,495 788,552 824,608 842,633 860,655 896,684 914,692 968,698 985,690 1004,680 1040,654 1058,636 1076,610 1112,540 1129,500 1147,470 1165,447 1183,433 1200,426 1236,422 1272,424 1308,434 1344,443 1380,450 1416,465 1451,468 1487,460 1523,450 1541,448',1770,GOLD,2.24));
put('axis','<rect x="12" y="2022" width="680" height="83" fill="#f7f8fa"/>'
 +[...Array(63)].map((_,k)=>{const i=k+22,big=i==39||i==84;return `<path d="M${X(i)+.6} 2022v${big?15:9}" stroke="#777" stroke-width="${big?3:1.8}" opacity="${Math.min(1,.2+k*.12)}"/>`}).join('')
 +[['20251020',18],['20251212',245],['20260225',521]].map(([s,x])=>txt(s,x,2070,167,37,'#666')).join(''));
</script>
</body>
</html>
